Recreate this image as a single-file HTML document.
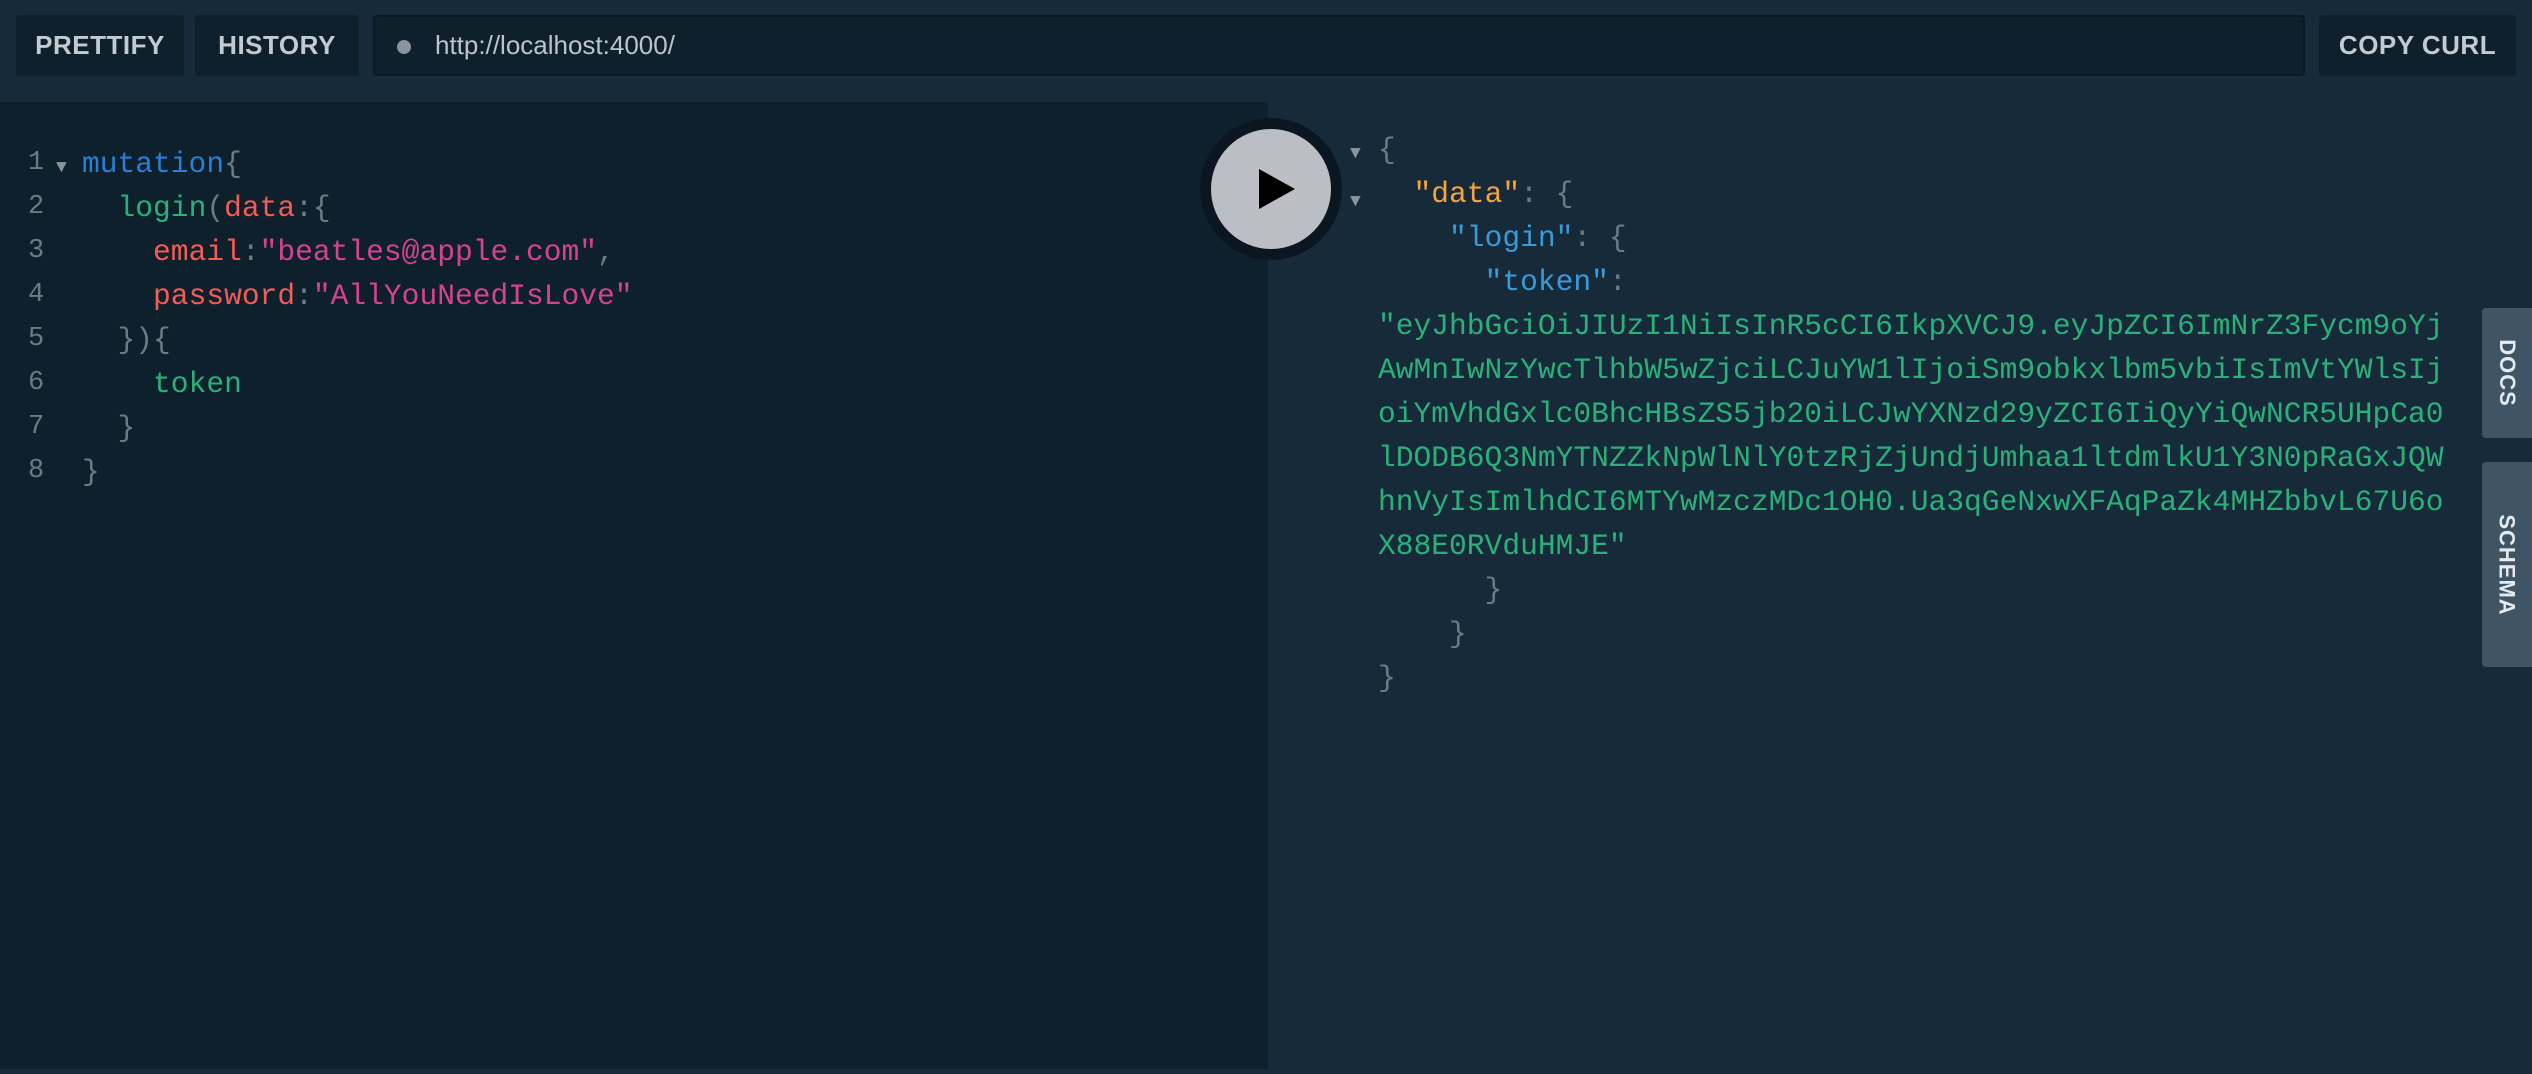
<!DOCTYPE html>
<html><head><meta charset="utf-8"><style>
*{margin:0;padding:0;box-sizing:border-box}
body{width:2532px;height:1074px;background:#172a3a;position:relative;overflow:hidden;font-family:"Liberation Sans",sans-serif}
.btn{position:absolute;top:15px;height:61px;background:#0f202d;border-radius:3px;color:#c3cad0;font-size:26px;font-weight:bold;letter-spacing:0.5px;display:flex;align-items:center;justify-content:center}
.url{position:absolute;left:373px;top:15px;width:1932px;height:61px;background:#0f202d;border:2px solid #0a1822;border-radius:4px}
.dot{position:absolute;left:22px;top:23px;width:14px;height:14px;border-radius:50%;background:#8a949c}
.url span{position:absolute;left:60px;top:13px;font-size:26px;color:#bcc4ca}
.left{position:absolute;left:0;top:102px;width:1268px;height:967px;background:#0f202d}
.code{position:absolute;font-family:"Liberation Mono",monospace;font-size:29.6px;line-height:44px;white-space:pre;color:#6b7b86}
.ln{position:absolute;left:28px;font-family:"Liberation Mono",monospace;font-size:27px;color:#6b7b86}
.k{color:#2a7ed3}.g{color:#2bb07a}.a{color:#f25c54}.s{color:#d64292}.o{color:#f5a33a}.b{color:#3a9ad9}
.arr{color:#8a949c;font-size:18px}
.play{position:absolute;left:1200px;top:118px;width:142px;height:142px;border-radius:50%;background:#0b1620}
.play div{position:absolute;left:11px;top:11px;width:120px;height:120px;border-radius:50%;background:#bbbfc5}
.tab{position:absolute;left:2482px;width:50px;background:#3f5465;border-radius:4px 0 0 4px;color:#e6eaed;font-size:22px;font-weight:bold;letter-spacing:1px;display:flex;align-items:center;justify-content:center}
.tab span{transform:rotate(90deg);white-space:nowrap}
</style></head><body>
<div class="btn" style="left:16px;width:168px">PRETTIFY</div>
<div class="btn" style="left:195px;width:164px">HISTORY</div>
<div class="url"><div class="dot"></div><span>http://localhost:4000/</span></div>
<div class="btn" style="left:2319px;width:197px">COPY CURL</div>
<div class="left"></div>
<div class="ln" style="top:141px;line-height:44px">1<br>2<br>3<br>4<br>5<br>6<br>7<br>8</div>
<div class="code" style="left:56px;top:142px"><span class="arr">▼</span></div>
<div class="code" style="left:82px;top:142px"><span class="k">mutation</span>{
  <span class="g">login</span>(<span class="a">data</span>:{
    <span class="a">email</span>:<span class="s">"beatles@apple.com"</span>,
    <span class="a">password</span>:<span class="s">"AllYouNeedIsLove"</span>
  }){
    <span class="g">token</span>
  }
}</div>
<div class="play"><div><svg width="120" height="120" viewBox="0 0 120 120"><path d="M48 40 L84 60 L48 80 Z" fill="#000"/></svg></div></div>
<div class="code" style="left:1350px;top:128px;line-height:44px"><span class="arr">▼</span>
<span class="arr">▼</span></div>
<div class="code" style="left:1378px;top:128px">{
  <span class="o">"data"</span>: {
    <span class="b">"login"</span>: {
      <span class="b">"token"</span>:
<span class="g">"eyJhbGciOiJIUzI1NiIsInR5cCI6IkpXVCJ9.eyJpZCI6ImNrZ3Fycm9oYj
AwMnIwNzYwcTlhbW5wZjciLCJuYW1lIjoiSm9obkxlbm5vbiIsImVtYWlsIj
oiYmVhdGxlc0BhcHBsZS5jb20iLCJwYXNzd29yZCI6IiQyYiQwNCR5UHpCa0
lDODB6Q3NmYTNZZkNpWlNlY0tzRjZjUndjUmhaa1ltdmlkU1Y3N0pRaGxJQW
hnVyIsImlhdCI6MTYwMzczMDc1OH0.Ua3qGeNxwXFAqPaZk4MHZbbvL67U6o
X88E0RVduHMJE"</span>
      }
    }
}</div>
<div class="tab" style="top:308px;height:130px"><span>DOCS</span></div>
<div class="tab" style="top:462px;height:205px"><span>SCHEMA</span></div>
</body></html>
